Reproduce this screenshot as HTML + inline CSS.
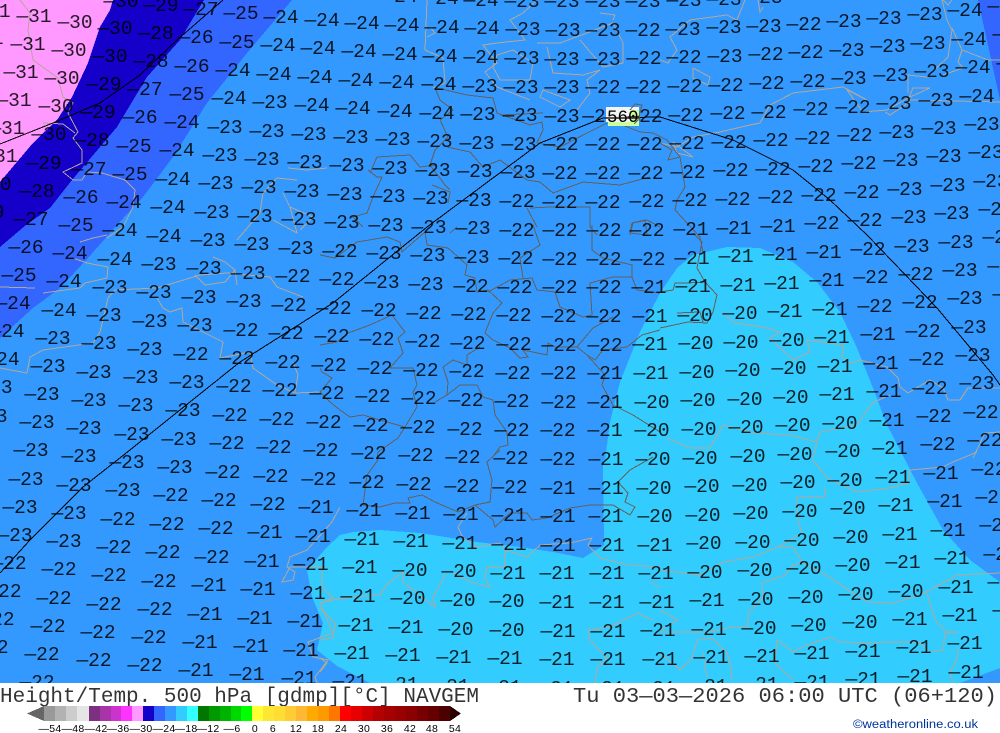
<!DOCTYPE html>
<html><head><meta charset="utf-8"><title>Height/Temp. 500 hPa NAVGEM</title>
<style>
html,body{margin:0;padding:0;background:#fff}
svg{display:block}
.c polyline{fill:none;stroke:#b3a898;stroke-width:1;shape-rendering:crispEdges}
.d polyline{fill:none;stroke:#665f58;stroke-width:1;shape-rendering:crispEdges}
.k polyline{fill:none;stroke:#000;stroke-width:1;shape-rendering:crispEdges}
polygon{shape-rendering:crispEdges}
.t text{font-family:"Liberation Mono",monospace;font-size:19.5px;text-anchor:middle;fill:#000;fill-opacity:.85}
</style></head><body>
<svg width="1000" height="733" viewBox="0 0 1000 733" xmlns="http://www.w3.org/2000/svg">
<rect width="1000" height="733" fill="#fff"/>
<svg x="0" y="0" width="1000" height="683" viewBox="0 0 1000 683">
<rect width="1000" height="683" fill="#3399ff"/>
<polygon fill="#3366ff" points="204,0 292,0 247,53 207,103 173,157 143,197 117,225 88,258 60,288 33,308 0,338 0,247 26,225 50,208 72,180 117,127 147,77 180,40"/>
<polygon fill="#3366ff" points="978,0 1000,0 1000,100"/>
<polygon fill="#1400c8" points="113,0 204,0 180,40 147,77 117,127 72,180 50,208 26,225 0,247 0,182 33,143 57,120 72,97 88,63 100,27 110,10"/>
<polygon fill="#ff99ff" points="0,0 113,0 110,10 100,27 88,63 72,97 57,120 33,143 0,182"/>
<polygon fill="#33ccff" points="605,460 610,422 620,382 640,332 660,293 677,268 693,255 727,247 760,248 793,262 817,282 840,312 857,348 873,388 887,425 900,450 917,483 943,530 970,560 1000,582 1000,668 960,683 370,683 337,666 317,650 323,623 312,597 307,570 327,547 340,535 353,532 380,530 420,533 477,542 520,547 553,552 583,558 604,545 603,460"/>
<g class="c">
<polyline points="20,0 30,13 28,30 33,60 58,78 63,97 73,103 68,113 78,132 73,138 82,150 82,163 63,172 73,180 82,180 87,172 102,173 125,180 135,190 133,207 123,227 107,238"/>
<polyline points="43,123 63,124 75,133"/>
<polyline points="80,242 93,238 107,235"/>
<polyline points="73,258 87,263 108,267 107,278 85,283 80,288 43,293"/>
<polyline points="0,287 35,288"/>
<polyline points="0,368 27,373 30,357 43,350 93,343 100,332 108,298 115,290 157,288 177,282 200,275 227,273 270,277 277,287 303,297"/>
<polyline points="157,298 163,308 170,312 182,308 183,322 203,332 223,342 220,358 250,352 253,368 277,385 295,393 320,392"/>
<polyline points="293,362 298,375 295,392"/>
<polyline points="213,257 225,262 235,270 237,285"/>
<polyline points="195,275 205,285 225,282 235,270"/>
<polyline points="288,168 307,170 327,168"/>
<polyline points="297,180 277,178 263,193 260,213 237,240"/>
<polyline points="283,193 290,207 297,233 273,220"/>
<polyline points="290,207 313,217 300,230"/>
<polyline points="427,0 425,50 443,58 445,83 433,88"/>
<polyline points="430,27 435,33 427,37"/>
<polyline points="537,0 523,13 510,20 525,40 497,43 483,45 497,63 485,72 497,87 530,100"/>
<polyline points="497,55 513,50 533,63 530,80 500,80 493,67 497,55"/>
<polyline points="537,43 560,43 587,33 613,23 623,43 623,63 603,67 580,40"/>
<polyline points="547,47 553,73 583,75 600,70 587,80 590,93 577,110"/>
<polyline points="543,90 570,100 560,107 540,97 543,90"/>
<polyline points="600,13 615,15 613,20"/>
<polyline points="745,0 737,20 727,15 690,20 670,37 677,50 668,63 660,60"/>
<polyline points="758,0 760,12 763,7"/>
<polyline points="693,68 710,77 708,85 693,78 693,68"/>
<polyline points="660,143 677,147 693,137 720,132 750,125 760,123 770,105 793,93 843,87 867,100 847,90 863,112 887,110 910,97 930,88 913,88 908,100 1000,102"/>
<polyline points="885,112 890,115 910,102"/>
<polyline points="942,0 947,20 952,30 948,57 927,77 908,75 908,93"/>
<polyline points="952,28 962,50 958,62 963,68 943,75"/>
<polyline points="962,50 988,60 1000,60"/>
<polyline points="943,0 948,5 952,0"/>
<polyline points="673,142 693,157 677,153 673,142"/>
<polyline points="722,312 735,323 763,327 780,332 770,338 793,360 810,352 807,340 843,345 842,357 850,363 860,360 887,367 898,378 900,387 908,393 930,380 943,388 948,400 960,400 968,388 1000,388"/>
<polyline points="667,438 690,448 710,448 723,425 755,433 790,435 817,442 820,432 857,425 872,403 890,395"/>
<polyline points="817,442 813,458"/>
<polyline points="813,460 827,478 857,492 890,488 908,483 910,470 943,467 953,462 977,452"/>
<polyline points="973,458 985,433 1000,432"/>
<polyline points="825,487 825,497 797,497 798,520 802,533 778,547 753,557 723,562 700,575 660,570"/>
<polyline points="778,547 793,547 803,563 793,565 785,575 762,583 763,598 748,613 748,627 732,627 710,632 660,632"/>
<polyline points="803,563 823,573 845,588 867,602 893,603 920,595 943,583 957,575 1000,573"/>
<polyline points="927,593 933,613 937,623 947,632 958,632 945,633 943,650 928,652 920,642 890,642 870,643 840,642 830,637 807,645 793,652 777,640 775,663 793,680"/>
<polyline points="958,648 957,660 950,672 953,682"/>
<polyline points="692,658 697,640 712,638 727,653 730,663 732,680"/>
<polyline points="660,653 680,670 692,658"/>
<polyline points="703,653 707,677"/>
<polyline points="660,610 678,620 660,630"/>
<polyline points="467,513 458,527 463,538 477,547"/>
<polyline points="477,547 500,543 505,550 505,567 487,567 485,577 490,587 470,582 453,572 445,572 443,580 433,597 435,607 425,600 403,582 403,572 388,583 380,595 353,597 333,600 320,603"/>
<polyline points="505,550 527,557 540,545 570,543 592,538 588,545 600,558 628,565 660,567"/>
<polyline points="340,507 332,522 307,550 290,557 287,567 295,572 293,580 282,582 290,567 322,567 322,587 333,598 320,603 333,633 308,642 313,657 328,660 315,677 317,683"/>
<polyline points="320,608 335,623 333,638 320,640"/>
<polyline points="320,658 327,663 320,672"/>
<polyline points="588,630 610,627 637,613 653,620"/>
<polyline points="588,630 590,640 607,658 597,668 595,683"/>
<polyline points="650,582 660,588"/>
</g>
<g class="d">
<polyline points="435,88 440,100 453,110 440,120 448,137 435,150 430,165 445,185 450,190"/>
<polyline points="437,88 467,95 493,98 497,113 530,125 542,122 543,130 537,143 560,147 587,133 607,123"/>
<polyline points="447,147 470,152 483,167 500,160 527,180 540,182 553,193 583,182 620,185 650,177"/>
<polyline points="370,173 377,157 410,155 420,167 437,165"/>
<polyline points="368,170 377,177 382,177 373,197 367,213 353,217 363,227"/>
<polyline points="530,208 550,207 590,207 590,227 597,235"/>
<polyline points="527,208 537,227"/>
<polyline points="432,185 450,192 448,203"/>
<polyline points="630,235 633,223 647,220 660,227"/>
<polyline points="500,115 543,113"/>
<polyline points="653,133 667,140 680,157 685,187 677,200 675,210 700,237 703,253"/>
<polyline points="632,223 645,220 647,235 630,233 632,223"/>
<polyline points="605,118 620,112 632,108 640,120 625,126 640,132 653,133"/>
<polyline points="660,143 672,150 668,160 680,157"/>
<polyline points="320,255 335,258 357,242 387,237 400,242 402,252 425,232 427,245 448,248 467,265 465,275 475,278 477,292 488,290 502,303 493,313 485,333"/>
<polyline points="450,233 457,227"/>
<polyline points="488,292 510,280 532,278 537,290 555,292 560,307 583,317 592,315 590,283 613,277 632,277 637,290 660,293"/>
<polyline points="533,225 540,245 520,258 523,278"/>
<polyline points="592,225 592,250 603,258 632,265 632,277"/>
<polyline points="485,333 493,340 510,348 520,358 528,357 523,350 547,355 548,343 555,347 577,347 587,335 593,328 613,317"/>
<polyline points="577,347 587,355 595,360 603,350 627,347 642,335 660,330"/>
<polyline points="587,355 605,375 602,385 613,405 633,415 660,432"/>
<polyline points="480,347 467,355 467,365"/>
<polyline points="443,367 453,360 467,365"/>
<polyline points="443,367 448,382 447,395 435,402"/>
<polyline points="390,368 413,368 417,385 413,392 417,407 405,427 387,422 363,415 350,417 340,410 330,402 320,392"/>
<polyline points="398,338 405,332 392,315 370,325 348,333 337,342 320,345"/>
<polyline points="398,338 403,353 390,368"/>
<polyline points="405,427 398,438 378,452 377,460"/>
<polyline points="460,385 477,385 483,397 493,400 495,415 507,432 508,445 500,447 492,458"/>
<polyline points="460,385 447,395"/>
<polyline points="500,450 487,462 492,480 490,502 475,505 458,512 435,502 422,495 408,498 410,503 395,503 380,507 363,505 367,475 378,460"/>
<polyline points="475,505 493,520 495,527 510,513 527,513 532,520 547,518 570,508 590,505 613,505 630,515 635,507 625,502 628,493 618,482 630,470 653,457"/>
<polyline points="693,233 702,242 697,268 705,282 717,295 713,312 707,323 688,322 660,328"/>
<polyline points="660,292 673,290 675,283 687,283 705,282"/>
<polyline points="677,313 700,312 703,322"/>
<polyline points="320,392 332,378 322,372 320,368"/>
</g>
<g class="k">
<polyline points="0,144 53,123 100,103 140,75 177,40 223,0"/>
<polyline points="0,573 30,540 83,487 130,450 240,362 333,303 427,227 540,143 603,118 660,117 733,140 793,170 830,200 867,235 893,262 937,308 993,375 1000,385"/>
</g>
<rect x="606" y="107" width="33" height="15" fill="#f4f4f4"/>
<polygon fill="#ccff99" points="608,122 630,122 630,110 639,110 639,126 608,126"/>
<polyline points="606,118 640,118" fill="none" stroke="#555" stroke-width="2"/>
<g class="d"><polyline points="630,110 635,104 642,105 638,120 634,124"/></g>
<text x="607" y="122" style="font-family:'Liberation Mono',monospace;font-size:17.5px;fill:#000">560</text>
<g class="t">
<text x=400 y=2>—24</text><text x=441 y=4>—24</text><text x=481 y=6>—24</text><text x=522 y=7>—23</text><text x=562 y=7>—23</text><text x=603 y=7>—23</text><text x=643 y=7>—23</text><text x=684 y=6>—23</text><text x=724 y=5>—23</text><text x=765 y=3>—23</text>
<text x=121 y=7>—30</text><text x=161 y=11>—29</text><text x=201 y=15>—27</text><text x=241 y=19>—25</text><text x=281 y=23>—24</text><text x=322 y=26>—24</text><text x=362 y=29>—24</text><text x=402 y=31>—24</text><text x=442 y=33>—24</text><text x=482 y=34>—24</text><text x=523 y=35>—23</text><text x=563 y=36>—23</text><text x=603 y=36>—23</text><text x=643 y=36>—22</text><text x=683 y=35>—23</text><text x=724 y=33>—23</text><text x=764 y=32>—23</text><text x=804 y=30>—22</text><text x=844 y=27>—23</text><text x=884 y=24>—23</text><text x=925 y=20>—23</text><text x=965 y=16>—24</text><text x=1005 y=12>—24</text>
<text x=-7 y=17>—31</text><text x=34 y=22>—31</text><text x=75 y=28>—30</text><text x=115 y=34>—30</text><text x=156 y=39>—28</text><text x=196 y=43>—26</text><text x=237 y=48>—25</text><text x=278 y=51>—24</text><text x=318 y=54>—24</text><text x=359 y=57>—24</text><text x=400 y=60>—24</text><text x=440 y=62>—24</text><text x=481 y=63>—24</text><text x=522 y=64>—23</text><text x=562 y=65>—23</text><text x=603 y=65>—23</text><text x=644 y=64>—22</text><text x=684 y=63>—22</text><text x=725 y=62>—23</text><text x=766 y=60>—22</text><text x=806 y=58>—22</text><text x=847 y=56>—23</text><text x=888 y=52>—23</text><text x=928 y=49>—23</text><text x=969 y=45>—24</text><text x=1010 y=40>—24</text>
<text x=-14 y=44>—31</text><text x=28 y=50>—31</text><text x=69 y=56>—30</text><text x=110 y=62>—30</text><text x=151 y=67>—28</text><text x=192 y=72>—26</text><text x=233 y=76>—24</text><text x=274 y=80>—24</text><text x=315 y=83>—24</text><text x=356 y=86>—24</text><text x=397 y=88>—24</text><text x=439 y=90>—24</text><text x=480 y=92>—23</text><text x=521 y=93>—23</text><text x=562 y=93>—23</text><text x=603 y=93>—22</text><text x=644 y=93>—22</text><text x=685 y=92>—22</text><text x=726 y=91>—22</text><text x=767 y=89>—22</text><text x=808 y=87>—22</text><text x=849 y=84>—23</text><text x=891 y=81>—23</text><text x=932 y=77>—23</text><text x=973 y=73>—24</text><text x=1014 y=69>—24</text>
<text x=21 y=78>—31</text><text x=62 y=84>—30</text><text x=104 y=90>—29</text><text x=145 y=95>—27</text><text x=187 y=100>—25</text><text x=229 y=104>—24</text><text x=270 y=108>—23</text><text x=312 y=111>—24</text><text x=353 y=114>—24</text><text x=395 y=117>—24</text><text x=437 y=119>—24</text><text x=478 y=120>—23</text><text x=520 y=121>—23</text><text x=562 y=122>—23</text><text x=594 y=122>—2</text><text x=645 y=122>—22</text><text x=686 y=121>—22</text><text x=728 y=119>—22</text><text x=769 y=118>—22</text><text x=811 y=115>—22</text><text x=853 y=113>—22</text><text x=894 y=109>—23</text><text x=936 y=106>—23</text><text x=977 y=102>—24</text>
<text x=14 y=106>—31</text><text x=56 y=112>—30</text><text x=98 y=118>—29</text><text x=140 y=123>—26</text><text x=182 y=128>—24</text><text x=225 y=133>—23</text><text x=267 y=137>—23</text><text x=309 y=140>—23</text><text x=351 y=143>—23</text><text x=393 y=145>—23</text><text x=435 y=147>—23</text><text x=477 y=149>—23</text><text x=519 y=150>—23</text><text x=561 y=150>—22</text><text x=603 y=150>—22</text><text x=645 y=150>—22</text><text x=687 y=149>—22</text><text x=729 y=148>—22</text><text x=771 y=146>—22</text><text x=813 y=144>—22</text><text x=855 y=141>—22</text><text x=897 y=138>—23</text><text x=939 y=134>—23</text><text x=982 y=130>—23</text>
<text x=7 y=134>—31</text><text x=49 y=140>—30</text><text x=92 y=146>—28</text><text x=134 y=152>—25</text><text x=177 y=156>—24</text><text x=220 y=161>—23</text><text x=262 y=165>—23</text><text x=305 y=168>—23</text><text x=347 y=171>—23</text><text x=390 y=174>—23</text><text x=433 y=176>—23</text><text x=475 y=177>—23</text><text x=518 y=178>—23</text><text x=560 y=179>—22</text><text x=603 y=179>—22</text><text x=646 y=179>—22</text><text x=688 y=178>—22</text><text x=731 y=176>—22</text><text x=773 y=175>—22</text><text x=816 y=172>—22</text><text x=859 y=169>—22</text><text x=901 y=166>—23</text><text x=944 y=162>—23</text><text x=986 y=158>—23</text>
<text x=0 y=162>—31</text><text x=44 y=169>—29</text><text x=89 y=175>—27</text><text x=130 y=180>—25</text><text x=173 y=185>—24</text><text x=216 y=189>—23</text><text x=259 y=193>—23</text><text x=302 y=197>—23</text><text x=345 y=200>—23</text><text x=388 y=202>—23</text><text x=431 y=204>—23</text><text x=474 y=206>—23</text><text x=517 y=207>—22</text><text x=560 y=208>—22</text><text x=603 y=208>—22</text><text x=647 y=207>—22</text><text x=690 y=206>—22</text><text x=733 y=205>—22</text><text x=776 y=203>—22</text><text x=819 y=201>—22</text><text x=862 y=198>—22</text><text x=905 y=195>—23</text><text x=948 y=191>—23</text><text x=991 y=187>—23</text>
<text x=-6 y=190>—30</text><text x=37 y=197>—28</text><text x=81 y=203>—26</text><text x=124 y=208>—24</text><text x=168 y=213>—24</text><text x=212 y=218>—23</text><text x=255 y=222>—23</text><text x=299 y=225>—23</text><text x=342 y=228>—23</text><text x=386 y=231>—23</text><text x=429 y=233>—23</text><text x=473 y=234>—23</text><text x=517 y=236>—22</text><text x=560 y=236>—22</text><text x=604 y=236>—22</text><text x=647 y=236>—22</text><text x=691 y=235>—21</text><text x=734 y=234>—21</text><text x=778 y=232>—21</text><text x=822 y=229>—22</text><text x=865 y=226>—22</text><text x=909 y=223>—23</text><text x=952 y=219>—23</text><text x=996 y=215>—23</text>
<text x=-13 y=218>—29</text><text x=31 y=225>—27</text><text x=76 y=231>—25</text><text x=120 y=236>—24</text><text x=164 y=242>—24</text><text x=208 y=246>—23</text><text x=252 y=250>—23</text><text x=296 y=254>—23</text><text x=340 y=257>—22</text><text x=384 y=259>—23</text><text x=428 y=261>—23</text><text x=472 y=263>—23</text><text x=516 y=264>—22</text><text x=560 y=265>—22</text><text x=604 y=265>—22</text><text x=648 y=265>—22</text><text x=692 y=264>—21</text><text x=736 y=262>—21</text><text x=780 y=260>—21</text><text x=824 y=258>—21</text><text x=868 y=255>—22</text><text x=912 y=252>—23</text><text x=956 y=248>—23</text><text x=1000 y=243>—23</text>
<text x=26 y=253>—26</text><text x=70 y=259>—24</text><text x=115 y=265>—24</text><text x=159 y=270>—23</text><text x=204 y=274>—23</text><text x=248 y=279>—23</text><text x=293 y=282>—22</text><text x=337 y=285>—22</text><text x=382 y=288>—23</text><text x=426 y=290>—23</text><text x=471 y=292>—22</text><text x=515 y=293>—22</text><text x=560 y=293>—22</text><text x=604 y=293>—22</text><text x=649 y=293>—21</text><text x=693 y=292>—21</text><text x=738 y=291>—21</text><text x=782 y=289>—21</text><text x=827 y=286>—21</text><text x=871 y=283>—22</text><text x=916 y=280>—22</text><text x=960 y=276>—23</text><text x=1005 y=272>—23</text>
<text x=19 y=281>—25</text><text x=64 y=287>—24</text><text x=110 y=293>—23</text><text x=154 y=298>—23</text><text x=199 y=303>—23</text><text x=244 y=307>—23</text><text x=289 y=311>—22</text><text x=334 y=314>—22</text><text x=379 y=316>—22</text><text x=424 y=319>—22</text><text x=469 y=320>—22</text><text x=514 y=321>—22</text><text x=559 y=322>—22</text><text x=604 y=322>—22</text><text x=650 y=322>—21</text><text x=695 y=321>—20</text><text x=740 y=319>—20</text><text x=785 y=317>—21</text><text x=830 y=315>—21</text><text x=875 y=312>—22</text><text x=920 y=308>—22</text><text x=965 y=304>—23</text><text x=1010 y=300>—23</text>
<text x=13 y=309>—24</text><text x=59 y=316>—24</text><text x=104 y=321>—23</text><text x=150 y=327>—23</text><text x=195 y=331>—23</text><text x=241 y=336>—22</text><text x=286 y=339>—22</text><text x=332 y=342>—22</text><text x=377 y=345>—22</text><text x=423 y=347>—22</text><text x=468 y=349>—22</text><text x=514 y=350>—22</text><text x=559 y=351>—22</text><text x=605 y=351>—22</text><text x=650 y=350>—21</text><text x=696 y=349>—20</text><text x=741 y=348>—20</text><text x=787 y=346>—20</text><text x=832 y=343>—21</text><text x=878 y=340>—21</text><text x=923 y=337>—22</text><text x=969 y=333>—23</text>
<text x=7 y=337>—24</text><text x=53 y=344>—23</text><text x=99 y=349>—23</text><text x=145 y=355>—23</text><text x=191 y=360>—22</text><text x=237 y=364>—22</text><text x=283 y=368>—22</text><text x=329 y=371>—22</text><text x=375 y=374>—22</text><text x=421 y=376>—22</text><text x=467 y=377>—22</text><text x=513 y=379>—22</text><text x=559 y=379>—22</text><text x=605 y=379>—21</text><text x=651 y=379>—21</text><text x=697 y=378>—20</text><text x=743 y=376>—20</text><text x=789 y=374>—20</text><text x=835 y=372>—21</text><text x=881 y=369>—21</text><text x=927 y=365>—22</text><text x=973 y=361>—23</text>
<text x=2 y=365>—24</text><text x=48 y=372>—23</text><text x=94 y=378>—23</text><text x=141 y=383>—23</text><text x=187 y=388>—23</text><text x=234 y=392>—22</text><text x=280 y=396>—22</text><text x=327 y=399>—22</text><text x=373 y=402>—22</text><text x=419 y=404>—22</text><text x=466 y=406>—22</text><text x=512 y=407>—22</text><text x=559 y=408>—22</text><text x=605 y=408>—21</text><text x=652 y=408>—20</text><text x=698 y=406>—20</text><text x=745 y=405>—20</text><text x=791 y=403>—20</text><text x=837 y=400>—21</text><text x=884 y=397>—21</text><text x=930 y=394>—22</text><text x=977 y=389>—23</text>
<text x=-5 y=393>—23</text><text x=42 y=400>—23</text><text x=89 y=406>—23</text><text x=136 y=411>—23</text><text x=183 y=416>—23</text><text x=230 y=421>—22</text><text x=277 y=425>—22</text><text x=324 y=428>—22</text><text x=371 y=431>—22</text><text x=418 y=433>—22</text><text x=465 y=435>—22</text><text x=512 y=436>—22</text><text x=558 y=436>—22</text><text x=605 y=436>—21</text><text x=652 y=436>—20</text><text x=699 y=435>—20</text><text x=746 y=433>—20</text><text x=793 y=431>—20</text><text x=840 y=429>—20</text><text x=887 y=426>—21</text><text x=934 y=422>—22</text><text x=981 y=418>—22</text>
<text x=-10 y=422>—23</text><text x=37 y=428>—23</text><text x=84 y=434>—23</text><text x=132 y=440>—23</text><text x=179 y=445>—23</text><text x=227 y=449>—22</text><text x=274 y=453>—22</text><text x=321 y=456>—22</text><text x=369 y=459>—22</text><text x=416 y=461>—22</text><text x=463 y=463>—22</text><text x=511 y=464>—22</text><text x=558 y=465>—22</text><text x=606 y=465>—21</text><text x=653 y=465>—20</text><text x=700 y=464>—20</text><text x=748 y=462>—20</text><text x=795 y=460>—20</text><text x=843 y=457>—20</text><text x=890 y=454>—21</text><text x=938 y=450>—22</text><text x=985 y=446>—22</text>
<text x=31 y=456>—23</text><text x=79 y=462>—23</text><text x=127 y=468>—23</text><text x=175 y=473>—23</text><text x=223 y=478>—22</text><text x=271 y=482>—22</text><text x=319 y=485>—22</text><text x=367 y=488>—22</text><text x=414 y=490>—22</text><text x=462 y=492>—22</text><text x=510 y=493>—22</text><text x=558 y=494>—21</text><text x=606 y=494>—21</text><text x=654 y=494>—20</text><text x=702 y=492>—20</text><text x=750 y=491>—20</text><text x=798 y=488>—20</text><text x=845 y=486>—20</text><text x=893 y=483>—21</text><text x=941 y=479>—21</text><text x=989 y=475>—22</text>
<text x=26 y=485>—23</text><text x=74 y=491>—23</text><text x=123 y=496>—23</text><text x=171 y=501>—22</text><text x=219 y=506>—22</text><text x=268 y=510>—22</text><text x=316 y=513>—21</text><text x=364 y=516>—21</text><text x=413 y=519>—21</text><text x=461 y=520>—21</text><text x=509 y=521>—21</text><text x=558 y=522>—21</text><text x=606 y=522>—21</text><text x=655 y=522>—20</text><text x=703 y=521>—20</text><text x=751 y=519>—20</text><text x=800 y=517>—20</text><text x=848 y=514>—20</text><text x=896 y=511>—21</text><text x=945 y=507>—21</text><text x=993 y=503>—21</text>
<text x=20 y=513>—23</text><text x=69 y=519>—23</text><text x=118 y=525>—22</text><text x=167 y=530>—22</text><text x=216 y=534>—22</text><text x=265 y=538>—21</text><text x=313 y=542>—21</text><text x=362 y=545>—21</text><text x=411 y=547>—21</text><text x=460 y=549>—21</text><text x=509 y=550>—21</text><text x=558 y=551>—21</text><text x=607 y=551>—21</text><text x=655 y=551>—21</text><text x=704 y=549>—20</text><text x=753 y=548>—20</text><text x=802 y=546>—20</text><text x=851 y=543>—20</text><text x=900 y=540>—21</text><text x=948 y=536>—21</text><text x=997 y=531>—21</text>
<text x=15 y=541>—23</text><text x=64 y=547>—23</text><text x=114 y=553>—22</text><text x=163 y=558>—22</text><text x=212 y=563>—22</text><text x=262 y=567>—21</text><text x=311 y=570>—21</text><text x=360 y=573>—21</text><text x=410 y=576>—20</text><text x=459 y=577>—20</text><text x=508 y=579>—21</text><text x=557 y=579>—21</text><text x=607 y=579>—21</text><text x=656 y=579>—21</text><text x=705 y=578>—20</text><text x=755 y=576>—20</text><text x=804 y=574>—20</text><text x=853 y=571>—20</text><text x=903 y=568>—21</text><text x=952 y=564>—21</text><text x=1001 y=560>—21</text>
<text x=9 y=569>—22</text><text x=59 y=575>—22</text><text x=109 y=581>—22</text><text x=159 y=587>—22</text><text x=209 y=591>—21</text><text x=258 y=595>—21</text><text x=308 y=599>—21</text><text x=358 y=602>—21</text><text x=408 y=604>—20</text><text x=458 y=606>—20</text><text x=507 y=607>—20</text><text x=557 y=608>—21</text><text x=607 y=608>—21</text><text x=657 y=608>—21</text><text x=707 y=606>—21</text><text x=756 y=605>—20</text><text x=806 y=603>—20</text><text x=856 y=600>—20</text><text x=906 y=597>—20</text><text x=956 y=593>—21</text><text x=1005 y=588>—21</text>
<text x=4 y=597>—22</text><text x=54 y=604>—22</text><text x=104 y=610>—22</text><text x=155 y=615>—22</text><text x=205 y=620>—21</text><text x=255 y=624>—21</text><text x=305 y=627>—21</text><text x=356 y=631>—21</text><text x=406 y=633>—21</text><text x=456 y=635>—20</text><text x=507 y=636>—20</text><text x=558 y=637>—21</text><text x=608 y=637>—21</text><text x=658 y=636>—21</text><text x=709 y=635>—21</text><text x=759 y=634>—20</text><text x=809 y=631>—20</text><text x=860 y=628>—20</text><text x=910 y=625>—21</text><text x=960 y=621>—21</text><text x=1010 y=616>—21</text>
<text x=-3 y=625>—22</text><text x=48 y=632>—22</text><text x=98 y=638>—22</text><text x=149 y=643>—22</text><text x=200 y=648>—21</text><text x=251 y=652>—21</text><text x=301 y=656>—21</text><text x=352 y=659>—21</text><text x=403 y=661>—21</text><text x=454 y=663>—21</text><text x=505 y=664>—21</text><text x=557 y=665>—21</text><text x=608 y=665>—21</text><text x=660 y=665>—21</text><text x=711 y=663>—21</text><text x=762 y=662>—21</text><text x=812 y=659>—21</text><text x=863 y=657>—21</text><text x=914 y=653>—21</text><text x=965 y=649>—21</text>
<text x=-9 y=653>—22</text><text x=42 y=660>—22</text><text x=94 y=666>—22</text><text x=145 y=671>—22</text><text x=196 y=676>—21</text><text x=247 y=680>—21</text><text x=299 y=684>—21</text><text x=350 y=687>—21</text><text x=401 y=690>—21</text><text x=452 y=692>—21</text><text x=504 y=693>—21</text><text x=556 y=694>—21</text><text x=607 y=694>—21</text><text x=658 y=694>—21</text><text x=710 y=692>—21</text><text x=761 y=690>—21</text><text x=812 y=688>—21</text><text x=863 y=685>—21</text><text x=915 y=682>—21</text><text x=966 y=678>—21</text>
<text x=37 y=688>—22</text>
</g>
</svg>
<text x="0" y="702" textLength="479" lengthAdjust="spacingAndGlyphs" fill-opacity=".8" style="font-family:'Liberation Mono',monospace;font-size:21px;fill:#000">Height/Temp. 500 hPa [gdmp][°C] NAVGEM</text>
<text x="573" y="702" textLength="424" lengthAdjust="spacingAndGlyphs" fill-opacity=".8" style="font-family:'Liberation Mono',monospace;font-size:21px;fill:#000">Tu 03—03—2026 06:00 UTC (06+120)</text>
<polygon points="27,713.5 44,706 44,721" fill="#666"/>
<g shape-rendering="crispEdges">
<rect x="44" y="706" width="11" height="15" fill="#999"/><rect x="55" y="706" width="11" height="15" fill="#b2b2b2"/><rect x="66" y="706" width="11" height="15" fill="#ccc"/><rect x="77" y="706" width="12" height="15" fill="#e5e5e5"/><rect x="89" y="706" width="11" height="15" fill="#7b3080"/><rect x="100" y="706" width="11" height="15" fill="#a933a9"/><rect x="111" y="706" width="10" height="15" fill="#cc33cc"/><rect x="121" y="706" width="11" height="15" fill="#ff33ff"/><rect x="132" y="706" width="11" height="15" fill="#ff99ff"/><rect x="143" y="706" width="11" height="15" fill="#1400c8"/><rect x="154" y="706" width="11" height="15" fill="#3366ff"/><rect x="165" y="706" width="11" height="15" fill="#3399ff"/><rect x="176" y="706" width="11" height="15" fill="#33ccff"/><rect x="187" y="706" width="11" height="15" fill="#33ffff"/><rect x="198" y="706" width="11" height="15" fill="#007800"/><rect x="209" y="706" width="11" height="15" fill="#009900"/><rect x="220" y="706" width="11" height="15" fill="#00b300"/><rect x="231" y="706" width="10" height="15" fill="#00d900"/><rect x="241" y="706" width="11" height="15" fill="#0f0"/><rect x="252" y="706" width="11" height="15" fill="#ff3"/><rect x="263" y="706" width="11" height="15" fill="#ffe633"/><rect x="274" y="706" width="11" height="15" fill="#ffdd33"/><rect x="285" y="706" width="11" height="15" fill="#ffcc33"/><rect x="296" y="706" width="11" height="15" fill="#ffb833"/><rect x="307" y="706" width="11" height="15" fill="#ffaa00"/><rect x="318" y="706" width="11" height="15" fill="#ff9900"/><rect x="329" y="706" width="11" height="15" fill="#ff7700"/><rect x="340" y="706" width="11" height="15" fill="#f00"/><rect x="351" y="706" width="11" height="15" fill="#e60000"/><rect x="362" y="706" width="11" height="15" fill="#c00"/><rect x="373" y="706" width="11" height="15" fill="#b30000"/><rect x="384" y="706" width="11" height="15" fill="#a60000"/><rect x="395" y="706" width="11" height="15" fill="#900"/><rect x="406" y="706" width="11" height="15" fill="#8b0000"/><rect x="417" y="706" width="11" height="15" fill="#780000"/><rect x="428" y="706" width="11" height="15" fill="#600"/><rect x="439" y="706" width="11" height="15" fill="#4d0000"/>
</g>
<polygon points="450,706 461,713.5 450,721" fill="#2b0000"/>
<g style="font-family:'Liberation Sans',sans-serif;font-size:10.5px;letter-spacing:.3px;fill:#000;text-anchor:middle">
<text x="50" y="732">—54</text><text x="73" y="732">—48</text><text x="96" y="732">—42</text><text x="118" y="732">—36</text><text x="141" y="732">—30</text><text x="164" y="732">—24</text><text x="186" y="732">—18</text><text x="208" y="732">—12</text><text x="232" y="732">—6</text><text x="255" y="732">0</text><text x="273" y="732">6</text><text x="296" y="732">12</text><text x="318" y="732">18</text><text x="341" y="732">24</text><text x="364" y="732">30</text><text x="387" y="732">36</text><text x="410" y="732">42</text><text x="432" y="732">48</text><text x="455" y="732">54</text>
</g>
<text x="853" y="728" textLength="125" lengthAdjust="spacingAndGlyphs" style="font-family:'Liberation Sans',sans-serif;font-size:11.5px;fill:#003399">©weatheronline.co.uk</text>
</svg>
</body></html>
